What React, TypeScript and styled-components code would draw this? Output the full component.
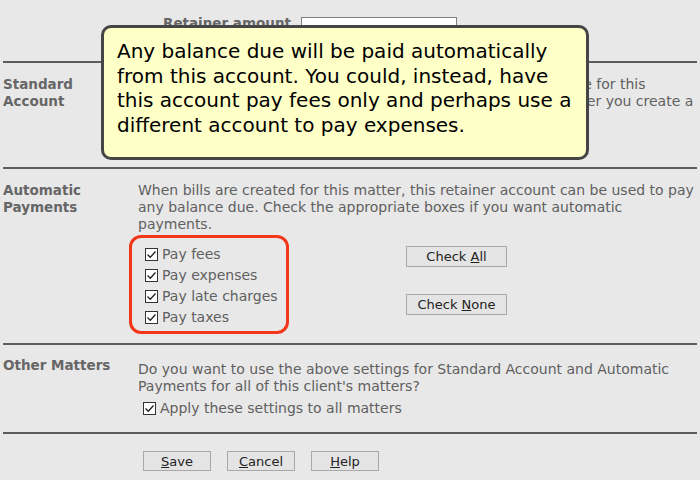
import React from "react";
import styled, { createGlobalStyle } from "styled-components";

const GlobalStyle = createGlobalStyle`
  html, body {
    margin: 0;
    padding: 0;
    background: #e8e8e8;
  }
  body {
    font-family: "DejaVu Sans", Verdana, sans-serif;
    color: #595959;
    overflow: hidden;
  }
`;

const Page = styled.div`
  position: relative;
  width: 700px;
  height: 480px;
  overflow: hidden;
  padding: 0 3px;
  box-sizing: border-box;
`;

const Section = styled.div<{ $height: number; $top?: number }>`
  display: grid;
  grid-template-columns: 135px 1fr;
  height: ${(p) => p.$height}px;
  padding-top: ${(p) => p.$top ?? 12}px;
  box-sizing: border-box;
  border-bottom: 2px solid #5c5c5c;
`;

const TopSection = styled.div`
  height: 63px;
  box-sizing: border-box;
  border-bottom: 2px solid #5c5c5c;
`;

const Label = styled.div`
  font-size: 13.5px;
  font-weight: bold;
  color: #666;
  line-height: 17px;
`;

const Body = styled.div<{ $shift?: number }>`
  font-size: 14px;
  line-height: 17px;
  color: #606060;
  white-space: nowrap;
  margin-top: ${(p) => p.$shift ?? 0}px;
`;

const AmountRow = styled.div`
  display: flex;
  align-items: flex-start;
  gap: 10px;
  padding-left: 160px;
  padding-top: 14px;
`;

const AmountLabel = styled.span`
  font-size: 13.5px;
  font-weight: bold;
  color: #666;
  line-height: 17px;
  padding-top: 1px;
  width: 128px;
`;

const TextInput = styled.div`
  width: 154px;
  height: 18px;
  margin-top: 3px;
  background: #fff;
  border: 1px solid #808080;
`;

const ChecksRow = styled.div`
  display: flex;
  margin-top: 2px;
`;

const Highlight = styled.div`
  width: 160px;
  box-sizing: border-box;
  padding: 8px 0 5px 13px;
  margin-left: -9px;
  border: 3px solid #f2371b;
  border-radius: 12px;
  display: flex;
  flex-direction: column;
  gap: 4px;
`;

const CheckLine = styled.label`
  display: flex;
  align-items: center;
  gap: 4px;
  font-size: 14px;
  line-height: 17px;
  color: #606060;
  white-space: nowrap;
`;

const Box = styled.span`
  width: 11px;
  height: 11px;
  border: 1px solid #333;
  background: #fff;
  display: inline-flex;
  align-items: center;
  justify-content: center;
`;

const ButtonColumn = styled.div`
  display: flex;
  flex-direction: column;
  gap: 27px;
  margin-left: 117px;
  padding-top: 11px;
`;

const Button = styled.button<{ $w: number; $h?: number }>`
  width: ${(p) => p.$w}px;
  height: ${(p) => p.$h ?? 21}px;
  padding: 0;
  background: #e4e4e4;
  border: 1px solid #a8a8a8;
  font-family: "DejaVu Sans", Verdana, sans-serif;
  font-size: 13px;
  color: #222;
  u {
    text-decoration: underline;
  }
`;

const ApplyLine = styled.div`
  margin-top: 5px;
  margin-left: 5px;
`;

const Footer = styled.div`
  display: flex;
  gap: 16px;
  padding: 17px 0 0 140px;
`;

const Tooltip = styled.div`
  position: absolute;
  left: 101px;
  top: 25px;
  width: 488px;
  height: 135px;
  box-sizing: border-box;
  background: #ffffc8;
  border: 3px solid #454545;
  border-radius: 10px;
  padding: 11px 8px 0 13px;
  font-size: 20px;
  line-height: 24.5px;
  color: #000;
  white-space: nowrap;
`;

const Tick = () => (
  <svg width="11" height="11" viewBox="0 0 11 11">
    <path d="M1.5 5.5 L4.3 8.3 L9.5 2.5" fill="none" stroke="#222" strokeWidth="1.3" />
  </svg>
);

const Check = ({ children }: { children: React.ReactNode }) => (
  <CheckLine>
    <Box>
      <Tick />
    </Box>
    {children}
  </CheckLine>
);

export default function App() {
  return (
    <>
      <GlobalStyle />
      <Page>
        <TopSection>
          <AmountRow>
            <AmountLabel>Retainer amount</AmountLabel>
            <TextInput />
          </AmountRow>
        </TopSection>
        <Section $height={106} $top={13}>
          <Label>
            Standard
            <br />
            Account
          </Label>
          <Body>
            Select a retainer account which will be used as the standard one for this
            <br />
            matter. You can also choose a different account for every bill after you create a
          </Body>
        </Section>
        <Section $height={176} $top={13}>
          <Label>
            Automatic
            <br />
            Payments
          </Label>
          <div>
            <Body>
              When bills are created for this matter, this retainer account can be used to pay
              <br />
              any balance due. Check the appropriate boxes if you want automatic
              <br />
              payments.
            </Body>
            <ChecksRow>
              <Highlight>
                <Check>Pay fees</Check>
                <Check>Pay expenses</Check>
                <Check>Pay late charges</Check>
                <Check>Pay taxes</Check>
              </Highlight>
              <ButtonColumn>
                <Button $w={101}>
                  Check <u>A</u>ll
                </Button>
                <Button $w={101}>
                  Check <u>N</u>one
                </Button>
              </ButtonColumn>
            </ChecksRow>
          </div>
        </Section>
        <Section $height={89} $top={12}>
          <Label>Other Matters</Label>
          <div>
            <Body $shift={4}>
              Do you want to use the above settings for Standard Account and Automatic
              <br />
              Payments for all of this client's matters?
            </Body>
            <ApplyLine>
              <Check>Apply these settings to all matters</Check>
            </ApplyLine>
          </div>
        </Section>
        <Footer>
          <Button $w={68} $h={20}>
            <u>S</u>ave
          </Button>
          <Button $w={68} $h={20}>
            <u>C</u>ancel
          </Button>
          <Button $w={68} $h={20}>
            <u>H</u>elp
          </Button>
        </Footer>
        <Tooltip>
          Any balance due will be paid automatically
          <br />
          from this account. You could, instead, have
          <br />
          this account pay fees only and perhaps use a
          <br />
          different account to pay expenses.
        </Tooltip>
      </Page>
    </>
  );
}
